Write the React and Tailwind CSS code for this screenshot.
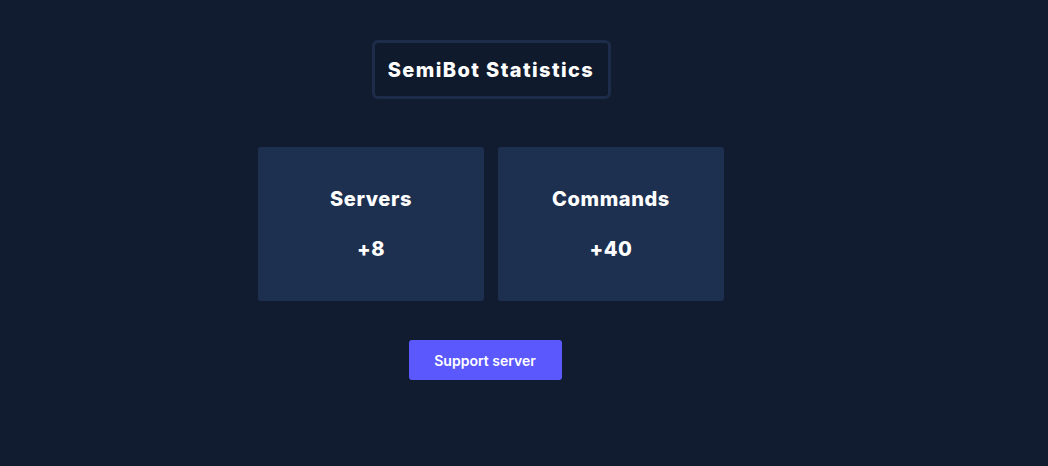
export default function App() {
  const stats = [
    { label: "Servers", value: "+8" },
    { label: "Commands", value: "+40" },
  ];

  return (
    <div
      className="min-h-[466px] bg-[#111c30] text-white"
      style={{ fontFamily: "Inter, 'Noto Sans', sans-serif" }}
    >
      <div className="w-[982px] flex flex-col items-center pt-[40px]">
        <div className="h-[59px] w-[239px] flex items-center justify-center rounded-md border-[3px] border-[#1d2c48] bg-[#0f1a2d]">
          <h1 className="text-[20px] font-extrabold tracking-[1.4px]">SemiBot Statistics</h1>
        </div>

        <div className="mt-[48px] flex gap-[14px]">
          {stats.map((s) => (
            <div
              key={s.label}
              className="w-[226px] h-[154px] rounded-[3px] bg-[#1e3050] flex flex-col items-center pt-[37px]"
            >
              <h2 className="text-[20px] font-extrabold leading-[30px] tracking-[0.6px]">{s.label}</h2>
              <p className="mt-[20px] text-[20px] font-extrabold leading-[30px] tracking-[0.5px]">{s.value}</p>
            </div>
          ))}
        </div>

        <button className="mt-[39px] mr-[12px] h-[40px] w-[153px] rounded-[3px] bg-[#5b59fd] text-[14px] font-semibold text-white">
          Support server
        </button>
      </div>
    </div>
  );
}
